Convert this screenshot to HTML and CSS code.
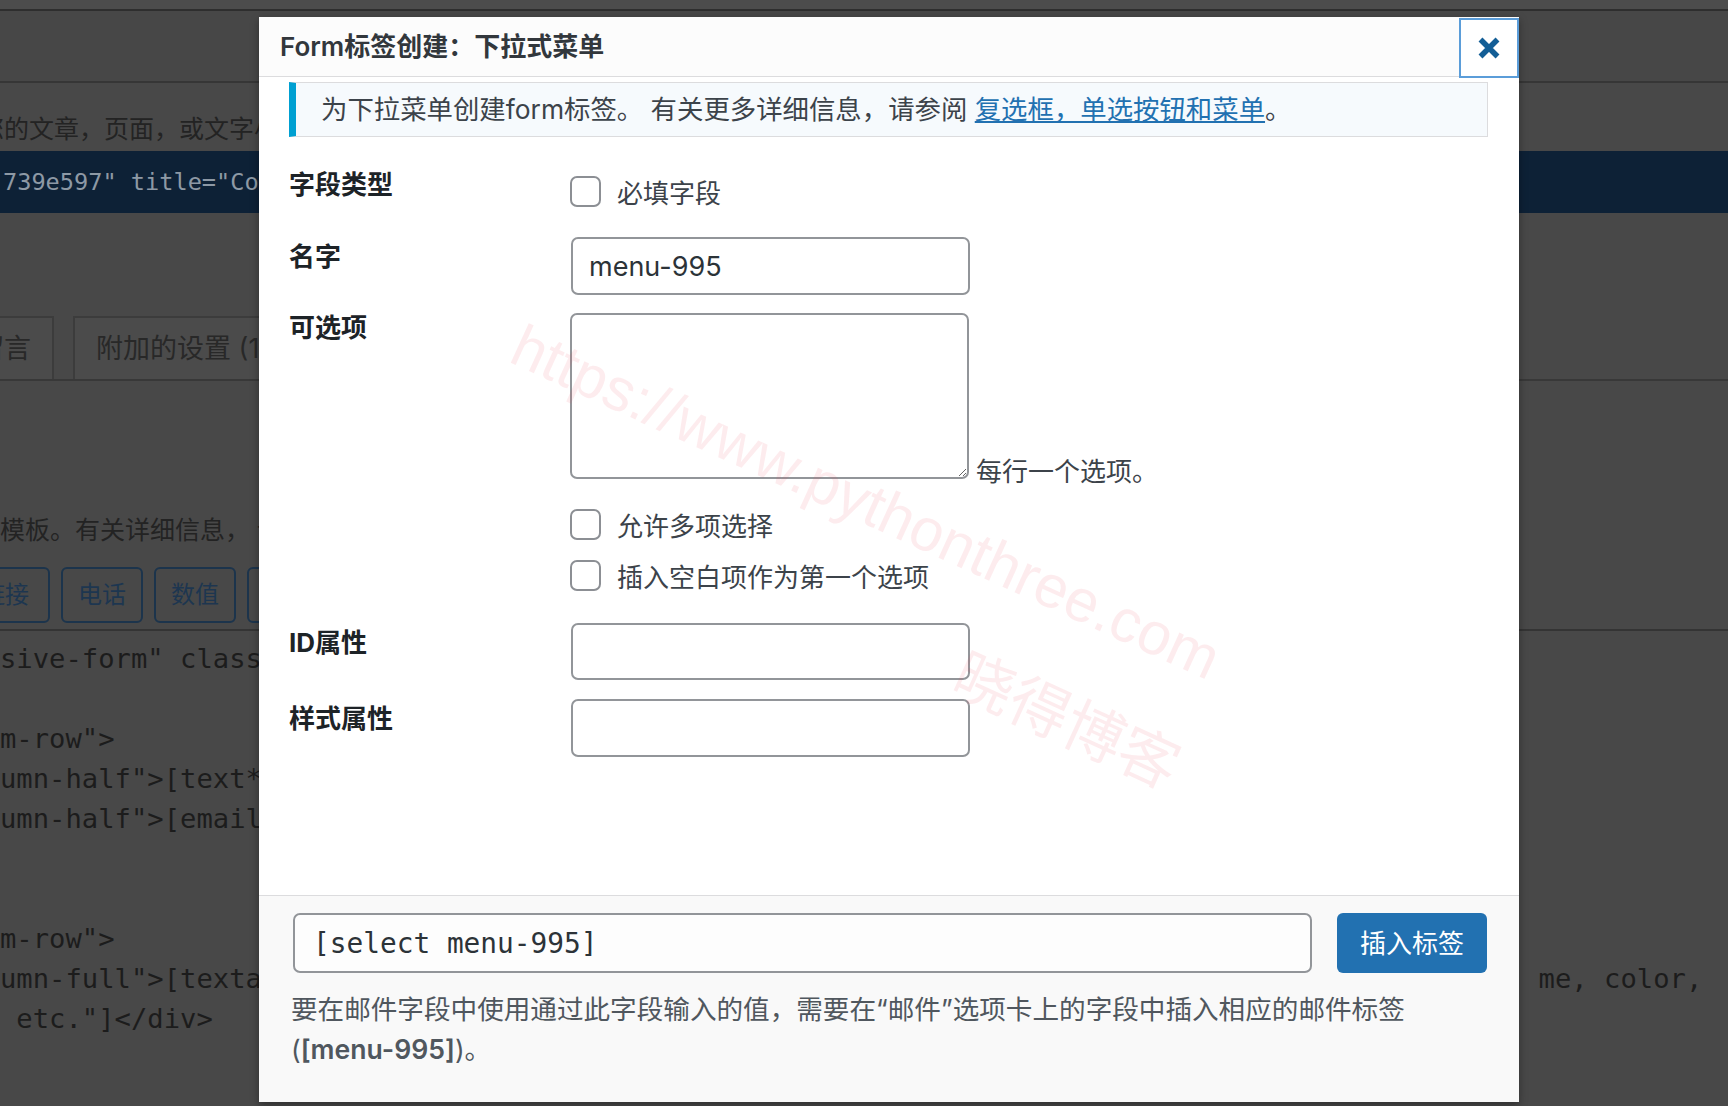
FILE: index.html
```html
<!DOCTYPE html>
<html>
<head>
  <meta charset="utf-8">
  <title>Form标签创建：下拉式菜单</title>
  <link rel="stylesheet" href="styles.css">
</head>
<body>

  <!-- admin page behind the overlay -->
  <div class="page">
    <div class="topbar"></div>
    <div class="subbar"></div>
    <p class="intro">粘贴到您的文章，页面，或文字小工具中。</p>
    <div class="shortcode">739e597" title="Contact form 1"]</div>
    <div class="tabs">
      <div class="tab tab-first">留言</div>
      <div class="tab">附加的设置 (1)</div>
    </div>
    <p class="hint">模板。有关详细信息， 请参阅编辑表单。</p>
    <div class="tag-buttons">
      <span class="tag-btn tag-btn-first">链接</span>
      <span class="tag-btn">电话</span>
      <span class="tag-btn">数值</span>
      <span class="tag-btn">日期</span>
    </div>
    <pre class="code">sive-form" class="form-wrap"&gt;

m-row"&gt;
umn-half"&gt;[text* your-name placeholder="Name"]&lt;/div&gt;
umn-half"&gt;[email* your-email placeholder="Email"]&lt;/div&gt;


m-row"&gt;
umn-full"&gt;[textarea your-message placeholder="Tell us about your items: size, style, font, a  me, color,
 etc."]&lt;/div&gt;</pre>
  </div>

  <div class="modal">
    <div class="modal-header">
      <div class="modal-title">Form标签创建：下拉式菜单</div>
      <button class="modal-close" aria-label="关闭">
        <svg width="24" height="24" viewBox="0 0 24 24"><path d="M3.5 3.5 L20.5 20.5 M20.5 3.5 L3.5 20.5" stroke="#135e96" stroke-width="5.5"/></svg>
      </button>
    </div>

    <div class="modal-body">
      <div class="notice">为下拉菜单创建form标签。 有关更多详细信息，请参阅 <a href="#">复选框，单选按钮和菜单</a>。</div>

      <div class="field field-type">
        <div class="field-label">字段类型</div>
        <div class="field-control control-check">
          <label class="check"><span class="box"></span>必填字段</label>
        </div>
      </div>

      <div class="field field-name">
        <div class="field-label">名字</div>
        <div class="field-control">
          <input class="text-input" type="text" value="menu-995">
        </div>
      </div>

      <div class="field field-options">
        <div class="field-label">可选项</div>
        <div class="field-control">
          <div class="options-line">
            <textarea class="options-area"></textarea>
            <span class="options-note">每行一个选项。</span>
          </div>
          <label class="check check-multi"><span class="box"></span>允许多项选择</label>
          <label class="check check-blank"><span class="box"></span>插入空白项作为第一个选项</label>
        </div>
      </div>

      <div class="field field-id">
        <div class="field-label">ID属性</div>
        <div class="field-control">
          <input class="text-input" type="text">
        </div>
      </div>

      <div class="field field-class">
        <div class="field-label">样式属性</div>
        <div class="field-control">
          <input class="text-input" type="text">
        </div>
      </div>
    </div>

    <div class="modal-footer">
      <div class="insert-row">
        <input class="tag-input" type="text" value="[select menu-995]" readonly>
        <button class="insert-btn">插入标签</button>
      </div>
      <p class="mail-tip">要在邮件字段中使用通过此字段输入的值，需要在“邮件”选项卡上的字段中插入相应的邮件标签<br>(<strong>[menu-995]</strong>)。</p>
    </div>
  </div>

  <div class="watermark wm-url">https://www.pythonthree.com</div>
  <div class="watermark wm-name">晓得博客</div>

</body>
</html>
```

FILE: styles.css
```css
body {
  margin: 0;
  width: 1728px;
  height: 1106px;
  overflow: hidden;
  position: relative;
  background: #484848;
  font-family: Inter, "Noto Sans CJK SC", sans-serif;
}

/* ---- dimmed admin page ---- */

.page {
  color: #232323;
  font-size: 25px;
}

.topbar {
  height: 9px;
  background: #4c4c4c;
  border-bottom: 2px solid #2e2e2e;
}

.subbar {
  height: 70px;
  background: #474747;
  border-bottom: 2px solid #363636;
}

.intro {
  margin: 0;
  padding-top: 28px;
  height: 40px;
  line-height: 36px;
  text-indent: -96px;
  white-space: nowrap;
}

.shortcode {
  height: 62px;
  line-height: 62px;
  background: #0d2136;
  color: #8d99a5;
  font-family: "DejaVu Sans Mono", monospace;
  font-size: 23.6px;
  padding-left: 3px;
  white-space: nowrap;
}

.tabs {
  display: flex;
  gap: 19px;
  margin-top: 103px;
  border-bottom: 2px solid #383838;
}

.tab {
  height: 61px;
  line-height: 61px;
  padding: 0 21px;
  background: #4b4b4b;
  border: 2px solid #3c3c3c;
  border-bottom: none;
  color: #282828;
  font-size: 27px;
  white-space: nowrap;
}

.tab-first {
  margin-left: -46px;
}

.hint {
  margin: 131px 0 0;
  line-height: 36px;
  white-space: nowrap;
}

.tag-buttons {
  display: flex;
  gap: 11px;
  margin-top: 19px;
  padding-bottom: 6px;
  border-bottom: 2px solid #343434;
}

.tag-btn {
  height: 52px;
  line-height: 52px;
  padding: 0 15px;
  border: 2px solid #1c344c;
  border-radius: 6px;
  color: #1d3650;
  font-size: 24px;
}

.tag-btn-first {
  margin-left: -36px;
  padding-right: 19px;
}

.code {
  margin: 0;
  padding-top: 8px;
  font-family: "DejaVu Sans Mono", monospace;
  font-size: 27.2px;
  line-height: 40px;
  color: #1c1c1c;
  white-space: pre;
}

/* ---- modal ---- */

.modal {
  position: absolute;
  left: 259px;
  top: 17px;
  width: 1260px;
  height: 1085px;
  background: #fff;
  box-shadow: 0 3px 8px rgba(0, 0, 0, 0.35);
  display: flex;
  flex-direction: column;
}

.modal-header {
  height: 59px;
  display: flex;
  align-items: center;
  justify-content: space-between;
  background: #fcfcfc;
  border-bottom: 1px solid #dcdcde;
}

.modal-title {
  padding-left: 21px;
  margin-top: -4px;
  font-size: 26px;
  font-weight: 600;
  color: #32373c;
}

.modal-close {
  width: 60px;
  height: 60px;
  margin-top: 1px;
  align-self: flex-start;
  background: #fff;
  border: 2px solid #5b9dd9;
  display: flex;
  align-items: center;
  justify-content: center;
  padding: 0;
}

.modal-body {
  flex: 1;
  padding: 5px 31px 0 30px;
}

.notice {
  height: 53px;
  line-height: 53px;
  padding-left: 25px;
  background: #f6fafd;
  border: 1px solid #dcdcde;
  border-left: 7px solid #00a0d2;
  font-size: 26.4px;
  color: #3c434a;
  white-space: nowrap;
}

.notice a {
  color: #2271b1;
}

.field {
  display: flex;
  align-items: flex-start;
}

.field-label {
  width: 281px;
  flex: none;
  font-size: 26px;
  font-weight: 700;
  line-height: 36px;
  color: #1d2327;
}

.field-control {
  display: flex;
  flex-direction: column;
  align-items: flex-start;
}

.field-type { margin-top: 30px; }
.field-name { margin-top: 28px; }
.field-options { margin-top: 15px; }
.field-id { margin-top: 30px; }
.field-class { margin-top: 19px; }

.field-name .field-label,
.field-id .field-label,
.field-class .field-label {
  margin-top: 2px;
}

.control-check {
  margin-top: 6px;
}

.field-options .field-control {
  margin-top: 3px;
}

.check {
  display: flex;
  align-items: center;
  gap: 16px;
  height: 36px;
  font-size: 26px;
  color: #3c434a;
}

.box {
  width: 27px;
  height: 27px;
  border: 2px solid #8c8f94;
  border-radius: 7px;
  background: #fff;
}

.check-multi { margin-top: 27px; }
.check-blank { margin-top: 15px; }

.text-input {
  box-sizing: border-box;
  width: 399px;
  height: 58px;
  margin-left: 1px;
  padding: 0 16px;
  border: 2px solid #929599;
  border-radius: 7px;
  font-family: Inter, "Noto Sans CJK SC", sans-serif;
  font-size: 27px;
  color: #2c3338;
  background: #fff;
}

.field-id .text-input {
  height: 57px;
}

.options-line {
  display: flex;
  align-items: flex-end;
}

.options-area {
  box-sizing: border-box;
  width: 399px;
  height: 166px;
  margin: 0;
  border: 2px solid #929599;
  border-radius: 7px;
  background: #fff;
}

.options-note {
  margin-left: 7px;
  margin-bottom: -6px;
  font-size: 26px;
  line-height: 26px;
  color: #3c434a;
}

.modal-footer {
  height: 189px;
  padding: 17px 32px 0 34px;
  background: #f9f9f9;
  border-top: 1px solid #dcdcde;
}

.insert-row {
  display: flex;
  gap: 25px;
}

.tag-input {
  box-sizing: border-box;
  flex: 1;
  height: 60px;
  padding: 0 18px;
  border: 2px solid #929599;
  border-radius: 7px;
  background: #fdfdfd;
  font-family: "DejaVu Sans Mono", monospace;
  font-size: 27.8px;
  color: #2c3338;
}

.insert-btn {
  width: 150px;
  height: 60px;
  border: none;
  border-radius: 6px;
  background: #2271b1;
  color: #fff;
  font-family: Inter, "Noto Sans CJK SC", sans-serif;
  font-size: 26px;
  padding: 0 0 3px;
}

.mail-tip {
  margin: 16px 0 0 -2px;
  font-size: 26.6px;
  line-height: 40px;
  color: #50575e;
}

.mail-tip strong {
  font-weight: 600;
}

/* ---- watermark over everything ---- */

.watermark {
  position: absolute;
  white-space: nowrap;
  pointer-events: none;
  color: rgba(235, 70, 90, 0.1);
  transform: translate(-50%, -50%) rotate(24.5deg);
}

.wm-url {
  left: 866px;
  top: 502px;
  font-family: "Liberation Sans", sans-serif;
  font-size: 60px;
}

.wm-name {
  left: 1069px;
  top: 716px;
  font-family: "Noto Sans CJK SC", sans-serif;
  font-size: 60px;
}
```
